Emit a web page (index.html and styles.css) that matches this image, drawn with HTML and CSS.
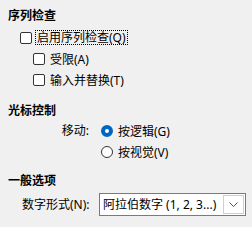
FILE: index.html
```html
<!DOCTYPE html>
<html lang="zh-CN">
<head>
    <meta charset="UTF-8">
    <title>序列检查</title>
    <link rel="stylesheet" href="styles.css">
</head>
<body>
    <div class="panel">
        <div class="section">
            <div class="section-title">序列检查</div>
            <label class="check-row level-1">
                <span class="check-box"></span>
                <span class="focus-label">启用序列检查(Q)</span>
            </label>
            <label class="check-row level-2">
                <span class="check-box"></span>
                <span class="plain-label">受限(A)</span>
            </label>
            <label class="check-row level-2">
                <span class="check-box"></span>
                <span class="plain-label">输入并替换(T)</span>
            </label>
        </div>

        <div class="section section-cursor">
            <div class="section-title">光标控制</div>
            <div class="radio-block">
                <div class="field-label move-label">移动:</div>
                <div class="radio-list">
                    <label class="radio-row">
                        <span class="radio-dot checked"></span>
                        <span>按逻辑(G)</span>
                    </label>
                    <label class="radio-row">
                        <span class="radio-dot"></span>
                        <span>按视觉(V)</span>
                    </label>
                </div>
            </div>
        </div>

        <div class="section section-general">
            <div class="section-title">一般选项</div>
            <div class="combo-row">
                <div class="field-label digit-label">数字形式(N):</div>
                <div class="combo">
                    <span class="combo-text">阿拉伯数字 (1, 2, 3...)</span>
                    <span class="combo-button">
                        <svg width="9" height="5" viewBox="0 0 9 5">
                            <path d="M0.5 0.5 L4.5 4.5 L8.5 0.5" fill="none" stroke="#555" stroke-width="1"/>
                        </svg>
                    </span>
                </div>
            </div>
        </div>
    </div>
</body>
</html>
```

FILE: styles.css
```css
body {
    margin: 0;
    background-color: #f0f0f0;
    font-family: "Noto Sans", "Noto Sans CJK SC", sans-serif;
    font-size: 12px;
    color: #000;
}

.panel {
    padding-top: 8px;
}

.section-title {
    height: 16px;
    line-height: 16px;
    padding-left: 8px;
    font-weight: bold;
    margin-bottom: 3px;
}

.section-cursor {
    margin-top: 13px;
}

.section-cursor .section-title {
    margin-bottom: 1px;
}

.section-general {
    margin-top: 11px;
}

.section-general .section-title {
    margin-bottom: 4px;
}

.check-row {
    display: flex;
    align-items: center;
    height: 21px;
}

.level-1 {
    padding-left: 20px;
}

.level-2 {
    padding-left: 33px;
}

.check-box {
    width: 10px;
    height: 10px;
    border: 1px solid #333;
    border-radius: 2px;
    background-color: #fff;
}

.focus-label {
    margin-left: 3px;
    padding: 0 1px;
    line-height: 13px;
    border: 1px dotted #000;
}

.plain-label {
    margin-left: 5px;
}

.radio-block {
    display: flex;
}

.field-label {
    line-height: 21px;
}

.move-label {
    width: 89px;
    text-align: right;
}

.radio-list {
    margin-left: 12px;
}

.radio-row {
    display: flex;
    align-items: center;
    gap: 5px;
    height: 21px;
}

.radio-dot {
    width: 10px;
    height: 10px;
    border: 1px solid #333;
    border-radius: 50%;
    background-color: #fff;
}

.radio-dot.checked {
    width: 4px;
    height: 4px;
    border: 4px solid #0067c0;
}

.combo-row {
    display: flex;
    align-items: center;
    padding-left: 22px;
}

.digit-label {
    width: 77px;
}

.combo {
    display: flex;
    align-items: stretch;
    width: 145px;
    height: 21px;
    border: 1px solid #7a7a7a;
    background-color: #fff;
}

.combo-text {
    flex: 1;
    padding-left: 3px;
    line-height: 21px;
    white-space: nowrap;
}

.combo-button {
    display: flex;
    align-items: center;
    justify-content: center;
    width: 19px;
    margin: 1px;
    border: 1px solid #d0d0d0;
}
```
